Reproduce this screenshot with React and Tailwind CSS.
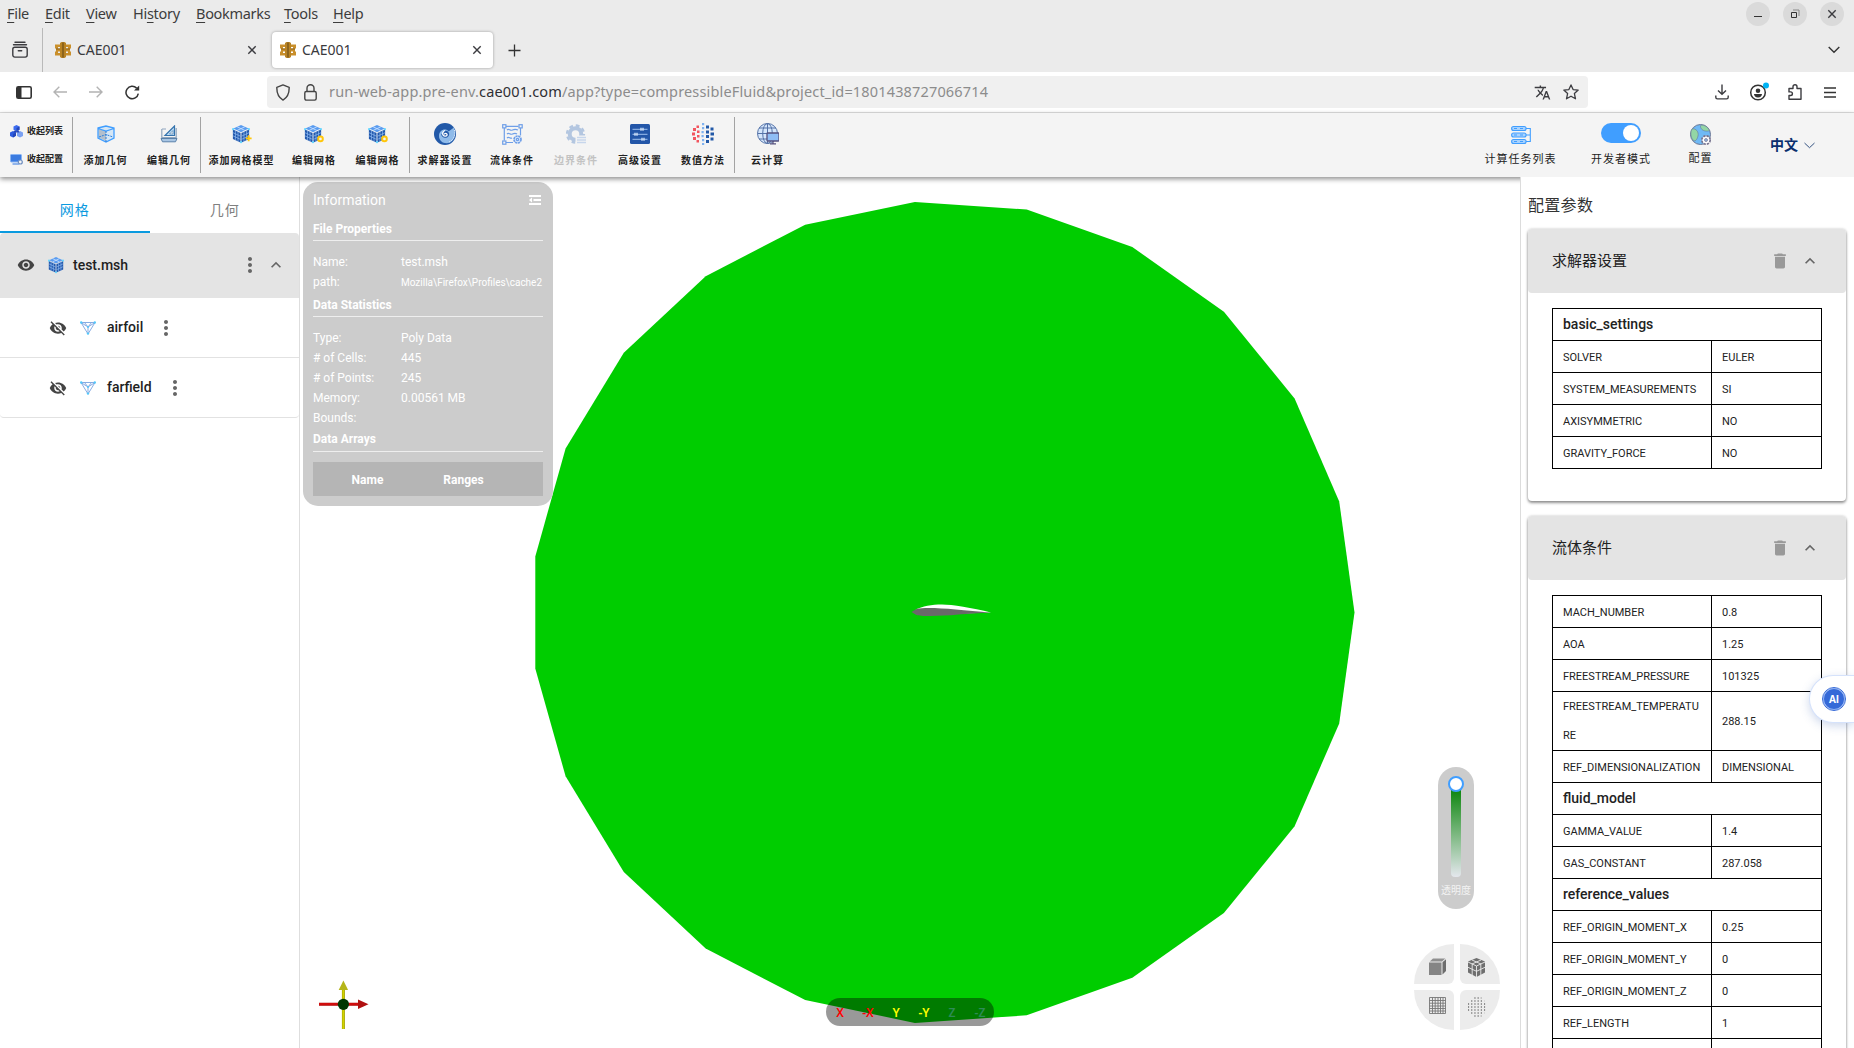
import React from "react";
import { MdVisibility, MdVisibilityOff, MdMoreVert, MdExpandLess, MdDelete, MdTranslate } from "react-icons/md";

const cjk = "font-[Roboto,'Noto_Sans_CJK_SC',sans-serif]";
const ui = "font-['Noto_Sans',sans-serif]";

/* ---------- browser chrome ---------- */

const menus = [
  ["", "F", "ile", "w-[38px]"],
  ["", "E", "dit", "w-[41px]"],
  ["", "V", "iew", "w-[47px]"],
  ["Hi", "s", "tory", "w-[63px]"],
  ["", "B", "ookmarks", "w-[88px]"],
  ["", "T", "ools", "w-[49px]"],
  ["", "H", "elp", "w-[40px]"],
];

function Favicon() {
  return (
    <svg width="16" height="16" viewBox="0 0 16 16" className="shrink-0">
      <path d="M0 2.500h5v2.500H3v1.500h10V5h-2V2.500h5V6.500h-1v3h1v4h-5V11h2V9.500H3V11h2v2.500H0v-4h1v-3H0z" fill="#c98f2b" />
      <path d="M5 1l1.500-1h3L11 1v14l-1.500 1h-3L5 15z" fill="#b98324" />
      <path d="M7.300.5h1.400v15H7.300z" fill="#7a581a" />
      <path d="M11 6.500h4v1h-4zM1 6.500h4v1H1z" fill="#8b6420" />
    </svg>
  );
}

function CloseX() {
  return (
    <svg width="10" height="10" viewBox="0 0 10 10" fill="none" stroke="#3c3c40" strokeWidth="1.4">
      <path d="M1.3 1.3l7.4 7.4M8.7 1.3L1.3 8.7" />
    </svg>
  );
}

function WinBtn({ children }) {
  return <div className="flex h-6 w-6 items-center justify-center rounded-full bg-[#dadada]">{children}</div>;
}

function MenuBar() {
  return (
    <div className="flex h-7 items-center bg-[#ebebeb] pl-[7px]">
      {menus.map(([a, u, b, w]) => (
        <div key={u + b} className={`${w} ${ui} shrink-0 whitespace-nowrap text-[14.5px] tracking-[-0.3px] text-[#3d3d3d]`}>
          {a}
          <span className="underline decoration-1 underline-offset-[3px]">{u}</span>
          {b}
        </div>
      ))}
      <div className="ml-auto flex gap-[13px] pr-[10px]">
        <WinBtn>
          <svg width="10" height="10" viewBox="0 0 10 10"><path d="M1 7.5h8" stroke="#333" /></svg>
        </WinBtn>
        <WinBtn>
          <svg width="10" height="10" viewBox="0 0 10 10" fill="none">
            <path d="M1.5 3.5h5v5h-5z" stroke="#333" /><path d="M3 1h6v6" stroke="#888" />
          </svg>
        </WinBtn>
        <WinBtn><CloseX /></WinBtn>
      </div>
    </div>
  );
}

function TabStrip() {
  return (
    <div className="flex h-11 bg-[#ebebeb]">
      <div className="flex w-[43px] items-center justify-center border-r border-[#b9b9b9] pb-px pr-[2px]">
        <svg width="16" height="17" viewBox="0 0 16 17" fill="none" stroke="#3c3c40" strokeWidth="1.4" strokeLinecap="round">
          <path d="M3 1.2h10M1.5 3.7h13" /><rect x=".8" y="6.2" width="14.4" height="9.9" rx="2" /><path d="M6.3 9.8h3.4" />
        </svg>
      </div>
      <div className="flex w-[229px] items-center pl-[12px]">
        <Favicon />
        <span className={`${ui} ml-[6px] pb-[2px] text-[14px] text-[#3a3a3e]`}>CAE001</span>
        <span className="ml-auto mr-[15px]"><CloseX /></span>
      </div>
      <div className="mt-1 flex h-9 w-[221px] items-center rounded bg-white pl-[8px] shadow-[0_0_3px_rgba(0,0,0,.35)]">
        <Favicon />
        <span className={`${ui} ml-[6px] pb-[2px] text-[14px] text-[#3a3a3e]`}>CAE001</span>
        <span className="ml-auto mr-[11px]"><CloseX /></span>
      </div>
      <div className="ml-[15px] flex items-center">
        <svg width="13" height="13" viewBox="0 0 13 13" stroke="#333" strokeWidth="1.3"><path d="M6.5.5v12M.5 6.5h12" /></svg>
      </div>
      <div className="ml-auto flex items-center pr-[14px]">
        <svg width="12" height="8" viewBox="0 0 12 8" fill="none" stroke="#333" strokeWidth="1.4"><path d="M.7 1L6 6.3 11.3 1" /></svg>
      </div>
    </div>
  );
}

function NavBar() {
  return (
    <div className="flex h-[41px] items-center border-b border-[#e0e0e0] bg-white pl-4">
      <svg width="16" height="13" viewBox="0 0 16 13"><rect x=".8" y=".8" width="14.4" height="11.4" rx="1.5" fill="none" stroke="#333" strokeWidth="1.6" /><path d="M1 1h4.5v11H1z" fill="#333" /></svg>
      <svg className="ml-[21px]" width="14" height="12" viewBox="0 0 14 12" fill="none" stroke="#b3b3b3" strokeWidth="1.4"><path d="M14 6H1M6.3.7L1 6l5.3 5.3" /></svg>
      <svg className="ml-[22px]" width="14" height="12" viewBox="0 0 14 12" fill="none" stroke="#b3b3b3" strokeWidth="1.4"><path d="M0 6h13M7.7.7L13 6l-5.3 5.3" /></svg>
      <svg className="ml-[22px]" width="15" height="15" viewBox="0 0 15 15" fill="none" stroke="#333" strokeWidth="1.5"><path d="M13.3 8.6A6.2 6.2 0 1 1 11.6 3.1" /><path d="M14.2.4v5.2H9z" fill="#333" stroke="none" /></svg>
      <div className="ml-[127px] flex h-8 w-[1321px] items-center rounded bg-[#f0f0f0] pl-[9px]">
        <svg width="14" height="17" viewBox="0 0 14 17" fill="none" stroke="#444" strokeWidth="1.4"><path d="M7 .9l6.200 2.400c.1 5-1.200 10-6.200 12.800C2 13.300.7 8.300.8 3.300z" strokeLinejoin="round" /></svg>
        <svg className="ml-[14px]" width="13" height="17" viewBox="0 0 13 17" fill="none" stroke="#444" strokeWidth="1.4"><rect x=".8" y="7.500" width="11.4" height="8.600" rx="1.500" /><path d="M3 7.500V4.300a3.500 3.500 0 0 1 7 0v3.200" /></svg>
        <div className={`${ui} ml-[12px] whitespace-nowrap text-[14.5px] tracking-[0.16px] text-[#8c8c8c]`}>
          run-web-app.pre-env.<span className="text-[#2f2f33]">cae001.com</span>/app?type=compressibleFluid&amp;project_id=1801438727066714
        </div>
        <MdTranslate className="ml-auto mr-[12px]" size={17} color="#3c3c40" />
        <svg className="mr-[9px]" width="16" height="16" viewBox="0 0 16 16" fill="none" stroke="#3c3c40" strokeWidth="1.3" strokeLinejoin="round"><path d="M8 .9l2.100 4.700 5.100.500-3.800 3.500 1.100 5.200L8 12.200l-4.500 2.600 1.100-5.200L.8 6.100l5.100-.5z" /></svg>
      </div>
      <div className="ml-auto flex items-center pr-[18px]">
        <svg width="14" height="16" viewBox="0 0 14 16" fill="none" stroke="#3c3c40" strokeWidth="1.400"><path d="M7 .500v9.500M3 6.500l4 3.800 4-3.800M.8 11.500v1.800c0 1 .7 1.600 1.600 1.600h9.200c.9 0 1.600-.6 1.600-1.600v-1.800" /></svg>
        <svg className="ml-[20px]" width="20" height="20" viewBox="0 0 20 20"><circle cx="9" cy="10.500" r="7.300" fill="none" stroke="#333" strokeWidth="1.500" /><circle cx="9" cy="8.700" r="2.300" fill="#333" /><path d="M5 12h8c0 2-1.500 3.400-4 3.400S5 14 5 12z" fill="#333" /><circle cx="17" cy="3.500" r="3" fill="#00b3f4" /></svg>
        <svg className="ml-[19px]" width="14" height="16" viewBox="0 0 14 16" fill="none" stroke="#3c3c40" strokeWidth="1.400" strokeLinejoin="round"><path d="M1 4.500h4V2.700a2 2 0 0 1 4 0v1.800h4v10.700H1v-3.700h1.600a1.800 1.800 0 0 0 0-3.600H1z" /></svg>
        <svg className="ml-[22px]" width="12" height="11" viewBox="0 0 12 11" stroke="#333" strokeWidth="1.300"><path d="M0 1h12M0 5.500h12M0 10h12" /></svg>
      </div>
    </div>
  );
}

/* ---------- toolbar icons ---------- */

function CubeGrid({ size = 18, badge }) {
  return (
    <svg width={size * 1.1} height={size} viewBox="0 0 22 20" className="overflow-visible">
      <path d="M10 0l8.500 4L10 8 1.500 4z" fill="#5a9cf0" />
      <path d="M5.700 2l8.500 4M14.300 2l-8.500 4" stroke="#cfe4ff" strokeWidth=".9" />
      <path d="M1 5l8.500 4v10.500L1 15.500z" fill="#2358ac" /><path d="M19 5l-8.500 4v10.500l8.500-4z" fill="#2358ac" />
      <path d="M1 8.500l8.500 4M19 8.500l-8.500 4M1 12l8.500 4M19 12l-8.500 4M3.800 6v11M6.700 7.500v11M13.300 7.500v11M16.200 6v11" stroke="#9cc8fb" strokeWidth=".7" fill="none" />
      <circle cx="1.300" cy="4.500" r="1.300" fill="#64d5ff" /><circle cx="18.700" cy="4.500" r="1.300" fill="#64d5ff" /><circle cx="10" cy="19" r="1.300" fill="#64d5ff" />
      {badge === "plus" && <path d="M18.500 11.500v6.500M15.300 14.800h6.500" stroke="#ffc60a" strokeWidth="2" />}
      {badge === "gear" && <circle cx="18.300" cy="15.500" r="2.600" fill="#f4f4f4" stroke="#ffc60a" strokeWidth="2.200" />}
    </svg>
  );
}

const icons = {
  addGeo: (
    <svg width="18" height="18" viewBox="0 0 18 18"><path d="M1 3l8-2 8 2v10l-8 4-8-4z" fill="#d5e6f5" /><path d="M1.500 4L9 6v10l-7.500-3.500z" fill="#b3bfcc" /><path d="M1 3l8-2 8 2v10l-8 4-8-4zM1 3.500L9 6l8-2.500" fill="none" stroke="#409eff" strokeWidth="1.300" /><path d="M9 6v11M2 12l7-2.500 7 2.500" stroke="#2c7fdc" strokeDasharray="2 1" fill="none" /></svg>
  ),
  editGeo: (
    <svg width="18" height="18" viewBox="0 0 18 18" fill="none"><path d="M2 4h4M1.800 4v8.500h14.400V3" stroke="#8fa6bf" strokeWidth="1.200" /><path d="M5 10.500L14.500 1v9.500z" fill="#bcdcf5" stroke="#3573ad" strokeWidth="1.200" /><path d="M9.500 9L13 5.500V9z" fill="#f4f4f4" stroke="#3573ad" strokeWidth=".6" /><path d="M1 13.500h16l-1.500 3.300h-13z" fill="#a9c6e4" stroke="#5a82ab" /></svg>
  ),
  addMesh: <CubeGrid badge="plus" />,
  editMesh: <CubeGrid badge="gear" />,
  solver: (
    <svg width="22" height="22" viewBox="0 0 22 22"><circle cx="11" cy="11" r="11" fill="#2259a8" /><path d="M20 4.500c2 7 1 12-4 15-5 2-11-.5-11-6.500C5 8.500 9 5.500 13 7c3 1.300 3.500 6 .5 7.500-2 .8-4-.5-3.800-2.500" fill="#8fbbea" /><path d="M9 12.500c-1-3 1.500-5.500 4-4.500 3 1.300 2.800 5.200 0 6.500-3 1.200-6-1-6-4" fill="#2259a8" /><path d="M10.300 11.500c0-1.500 2.600-1.500 2.800.2.100 1.500-2.800 2.200-4 .5-1-1.500-.2-4 2-4.700" fill="none" stroke="#fff" strokeWidth="1.300" /><path d="M20.500 7c1 5-.5 10-5.500 12" fill="none" stroke="#dcebfb" strokeWidth="1" strokeDasharray="1.500 .7" /></svg>
  ),
  fluid: (
    <svg width="21" height="21" viewBox="0 0 21 21" fill="none" stroke="#6f9fe8" strokeWidth="1.200"><path d="M3.500 2.300h13M2.300 3.500v13M3.500 18.500H11M18.500 3.500v8" /><g fill="#f4f4f4"><rect x=".7" y=".7" width="3.200" height="3.200" /><rect x="17" y=".7" width="3.200" height="3.200" /><rect x=".7" y="17" width="3.200" height="3.200" /></g><path d="M5 6c2-2 3 1.300 5.500 0S14 5 16 6M5 10c2-2 3 1.300 5.500 0S13.500 9 15 10M5 14c2-2 3 1 5 0" /><circle cx="15.500" cy="15.500" r="3.500" strokeWidth="1.700" strokeDasharray="2.200 .6" fill="#dbe8fb" /><circle cx="15.500" cy="15.500" r="1.200" /></svg>
  ),
  boundary: (
    <svg width="20" height="20" viewBox="0 0 20 20"><circle cx="9.500" cy="10" r="5.800" fill="none" stroke="#b3c6e0" strokeWidth="4" /><circle cx="9.500" cy="10" r="8.500" fill="none" stroke="#b3c6e0" strokeWidth="2.300" strokeDasharray="3.800 2.880" /><path d="M9.500 11.500H20V20H9.500z" fill="#f4f4f4" /><path d="M11 13.500h9M11 16h9M11 18.500h9" stroke="#c7d6ec" strokeWidth="1.400" /></svg>
  ),
  advanced: (
    <svg width="20" height="20" viewBox="0 0 20 20"><rect width="20" height="20" rx="1.500" fill="#2356a8" /><path d="M2.500 5.300h15M2.500 10.300h15M2.500 15.300h15" stroke="#9dc0ee" /><path d="M11 3.800v3M13 3.800v3M5 8.800v3M7 8.800v3M12 13.800v3M14 13.800v3" stroke="#dbe9fb" strokeWidth="1.300" /></svg>
  ),
  numeric: (
    <svg width="22" height="22" viewBox="0 0 22 22">
      <g fill="#f2555f"><path d="M1 5h3v3H1zM0 9.500h3v3H0zM1 14h3v3H1zM4.500 2.500h2.500v2.500H4.500zM5 7.500h2.500v2.500H5zM5 12h2.500v2.500H5zM4.500 17h2.500v2.500H4.500z" /></g>
      <g fill="#7fb2f0"><path d="M10 0h2.200v2.200H10zM10 4h2.200v2.200H10zM9.500 8h2.200v2.200H9.500zM9.500 12h2.200v2.200H9.500zM10 16h2.200v2.200H10zM10 20h2.200v2H10z" /></g>
      <g fill="#2259a8"><path d="M14 2.500h3v3h-3zM18.500 4.500h3v3h-3zM14 7.500h3v3h-3zM18.500 9.500H22v3h-3.500zM14 12h3v3h-3zM18.500 14.500h3v3h-3zM14 17h3v3h-3z" /></g>
    </svg>
  ),
  cloud: (
    <svg width="22" height="22" viewBox="0 0 22 22" fill="none" stroke="#5573a8" strokeWidth="1"><circle cx="10.500" cy="10.500" r="10" fill="#d5e6fb" /><ellipse cx="10.500" cy="10.500" rx="4.800" ry="10" /><path d="M10.500.5v20M.5 10.500h20M2 5h17M2 16h17" /><rect x="10" y="10" width="12" height="8" rx=".7" fill="#8fbdf5" stroke="#55527f" strokeWidth="1.300" /><path d="M16 18v2.500M13 20.800h6" stroke="#55527f" strokeWidth="1.200" /></svg>
  ),
};

const toolbar = [
  [["addGeo", "添加几何", "w-[65px]"], ["editGeo", "编辑几何", "w-[62px]"]],
  [["addMesh", "添加网格模型", "w-[81px]"], ["editMesh", "编辑网格", "w-[64px]"], ["editMesh", "编辑网格", "w-[63px]"]],
  [["solver", "求解器设置", "w-[70px]"], ["fluid", "流体条件", "w-[64px]"], ["boundary", "边界条件", "w-[64px]"], ["advanced", "高级设置", "w-[64px]"], ["numeric", "数值方法", "w-[62px]"]],
  [["cloud", "云计算", "w-[65px]"]],
];

function Toolbar() {
  return (
    <div className={`${cjk} relative z-10 flex h-16 shrink-0 items-center bg-[#f4f4f4] text-[#222] shadow-[0_2px_5px_rgba(0,0,0,.45)]`}>
      <div className="flex w-[72px] flex-col gap-[14px] pl-[9px] text-[9px] font-bold leading-[14px]">
        <div className="flex items-center gap-[4px] whitespace-nowrap">
          <svg className="ml-px" width="13" height="13" viewBox="0 0 13 13"><path d="M6.500 0l3 1.500v3.300l-3 1.500-3-1.500V1.500z" fill="#3d6cf0" /><path d="M3 6l3 1.500v3.300L3 12.500 0 11V7.500z" fill="#2d5be0" /><path d="M10 6l3 1.500V11l-3 1.500-3-1.500V7.500z" fill="#7ba1f2" /><path d="M6.500 3v3.300l3-1.500V1.500zM3 9v3.500l3-1.700V7.500zM4.500 5.500h4l1 2h-6z" fill="#2446b8" /></svg>
          收起列表
        </div>
        <div className="flex items-center gap-[4px] whitespace-nowrap">
          <svg className="ml-px" width="13" height="11" viewBox="0 0 13 11"><rect x=".500" y=".5" width="11" height="7.500" rx=".8" fill="#3b7be0" stroke="#8ab5f3" /><path d="M2.500 10h7" stroke="#5a92e6" strokeWidth="1.300" /><circle cx="10.300" cy="8" r="2" fill="#f4f4f4" stroke="#6f8fc0" strokeWidth="1.200" /></svg>
          收起配置
        </div>
      </div>
      {toolbar.map((group, i) => (
        <div key={i} className="flex h-14 border-l border-[#a3a3a3]">
          {group.map(([icon, label, w], j) => (
            <div key={j} className={`${w} flex shrink-0 flex-col items-center`}>
              <div className="mt-[6px] flex h-[22px] items-center">{icons[icon]}</div>
              <div className={`mt-[8px] whitespace-nowrap text-[10px] font-bold leading-4 tracking-[1px] ${icon === "boundary" ? "text-[#c2c2c2]" : ""}`}>{label}</div>
            </div>
          ))}
        </div>
      ))}
      <div className="ml-auto flex h-16 text-[11px] leading-4 tracking-[1px]">
        <div className="flex w-[100px] flex-col items-center">
          <svg className="ml-px mt-[12px]" width="20" height="20" viewBox="0 0 20 20" fill="#a8d3ff" stroke="#409eff" strokeWidth="1.100"><rect x=".6" y="1.500" width="14.500" height="4" rx="2" /><rect x=".6" y="8" width="14.500" height="4" rx="2" /><rect x=".6" y="14.500" width="14.500" height="4" rx="2" /><path d="M15 3.500h4.300v13H15M15 10h4.300" fill="none" /><path d="M3 3.500h3M9 3.500h3M3 10h3M9 10h3M3 16.500h3M9 16.500h3" /></svg>
          <div className="mt-[7px] whitespace-nowrap pl-px">计算任务列表</div>
        </div>
        <div className="flex w-[101px] flex-col items-center">
          <div className="mt-[10px] flex h-5 w-10 items-center justify-end rounded-full bg-[#409eff] pr-[2px]"><div className="h-4 w-4 rounded-full bg-white" /></div>
          <div className="mt-[9px] whitespace-nowrap pl-px">开发者模式</div>
        </div>
        <div className="flex w-[58px] flex-col items-center">
          <svg className="ml-px mt-[11px]" width="22" height="22" viewBox="0 0 22 22"><circle cx="10.500" cy="10.500" r="10" fill="#6fb9f5" stroke="#6c7794" /><path d="M2 5c4-1 7 3 6 7s-3 6-5 4C.5 13 .3 8 2 5zM11 1c4 0 7 2 8.500 5.500-3 1.500-7 0-8-1.500-1-1.300-1.500-3-.5-4z" fill="#93d6a5" stroke="#6c7794" strokeWidth=".6" /><circle cx="16" cy="16" r="4.200" fill="#fff" stroke="#77738f" strokeWidth="1.700" strokeDasharray="2.300 1" /><circle cx="16" cy="16" r="1.500" fill="#8fb4e0" stroke="#77738f" strokeWidth=".7" /></svg>
          <div className="mt-[5px] whitespace-nowrap pl-px">配置</div>
        </div>
        <div className="ml-[41px] flex w-[84px] items-center gap-[6px] text-[14px] font-bold tracking-[0] text-[#0b2f6e]">
          中文
          <svg className="mt-px" width="11" height="7" viewBox="0 0 11 7" fill="none" stroke="#33507f"><path d="M.5 1l5 4.700 5-4.700" /></svg>
        </div>
      </div>
    </div>
  );
}

/* ---------- left panel ---------- */

function MeshIcon() {
  return (
    <svg width="16" height="14" viewBox="0 0 16 14" fill="none" stroke="#7ba3e0" strokeWidth=".9"><path d="M1 1.500h14L8 13zM1 1.500l7 4.500 7-4.500M8 6v7M4.500 1.500L8 6l3.500-4.500" /><g fill="#53c8fa" stroke="none"><circle cx="1.200" cy="1.500" r="1.200" /><circle cx="14.800" cy="1.500" r="1.200" /><circle cx="8" cy="12.600" r="1.200" /><circle cx="8" cy="6" r="1" /></g></svg>
  );
}

function LeftPanel() {
  return (
    <div className={`${cjk} flex w-[300px] shrink-0 flex-col border-r border-[#dedede] text-[14px] text-[#1f1f1f]`}>
      <div className="flex h-14 shrink-0 tracking-[1px]">
        <div className="flex w-[150px] items-center justify-center border-b-2 border-[#0a9adf] pt-[12px] text-[#0a9adf]">网格</div>
        <div className="flex w-[150px] items-center justify-center pl-px pb-[2px] pt-[12px] text-[#808080]">几何</div>
      </div>
      <div className="flex h-[65px] shrink-0 items-center rounded-t bg-[#e4e4e4] pb-px pl-[17px]">
        <MdVisibility size={18} color="#444" />
        <div className="ml-[13px] mr-[9px] w-4"><CubeGrid size={16} /></div>
        <span className="font-medium">test.msh</span>
        <MdMoreVert className="ml-auto" size={24} color="#666" />
        <MdExpandLess className="ml-[4px] mr-[13px]" size={20} color="#666" />
      </div>
      {["airfoil", "farfield"].map((name) => (
        <div key={name} className="flex h-[60px] shrink-0 items-center border-b border-[#e2e2e2] pl-[49px] last:rounded-b">
          <MdVisibilityOff size={18} color="#444" />
          <span className="ml-[13px] mr-[11px]"><MeshIcon /></span>
          <span className="font-medium">{name}</span>
          <MdMoreVert className="ml-[11px]" size={24} color="#666" />
        </div>
      ))}
    </div>
  );
}

/* ---------- viewport ---------- */

const SIDES = 23;
const rim = Array.from({ length: SIDES }, (_, k) => {
  const a = (k * 2 * Math.PI) / SIDES;
  return `${(643 + 411.5 * Math.cos(a)).toFixed(1)},${(435.4 - 411.5 * Math.sin(a)).toFixed(1)}`;
}).join(" ");

function InfoHead({ children }) {
  return <div className="h-[24px] border-b border-[#eee] font-bold leading-6">{children}</div>;
}

function InfoRow({ k, v, small }) {
  return (
    <div className="flex h-5 items-center whitespace-nowrap">
      <span className="w-[88px] shrink-0">{k}</span>
      <span className={small ? "text-[10px]" : ""}>{v}</span>
    </div>
  );
}

function InfoPanel() {
  return (
    <div className="absolute left-[3px] top-[5px] h-[324px] w-[250px] rounded-[15px] bg-[#ccc] px-[10px] font-[Roboto,sans-serif] text-[12px] text-white">
      <div className="flex h-[35px] items-center justify-between pt-[2px] text-[14px]">
        <span>Information</span>
        <svg className="mb-px mr-[2px]" width="12" height="10" viewBox="0 0 12 10" fill="#fff"><path d="M0 0h12v2H0zM4.500 4H12v2H4.500zM0 8h12v2H0zM3 2.500v5L0 5z" /></svg>
      </div>
      <div className="pb-[11px]"><InfoHead>File Properties</InfoHead></div>
      <InfoRow k="Name:" v="test.msh" />
      <InfoRow k="path:" v="Mozilla\Firefox\Profiles\cache2" small />
      <div className="pb-[11px] pt-px"><InfoHead>Data Statistics</InfoHead></div>
      <InfoRow k="Type:" v="Poly Data" />
      <InfoRow k="# of Cells:" v="445" />
      <InfoRow k="# of Points:" v="245" />
      <InfoRow k="Memory:" v="0.00561 MB" />
      <InfoRow k="Bounds:" v="" />
      <div className="h-[24px] border-b border-[#eee] font-bold leading-[22px]">Data Arrays</div>
      <div className="mt-[10px] flex h-[34px] items-center bg-[#b5b5b5] pt-[2px] font-bold">
        <span className="w-[109px] text-center">Name</span>
        <span className="w-[83px] text-center">Ranges</span>
      </div>
    </div>
  );
}

function Viewport() {
  return (
    <div className="relative min-w-0 flex-1 overflow-hidden bg-white">
      <svg width="1220" height="871" viewBox="0 0 1220 871" className="block">
        <polygon points={rim} fill="#00cd00" />
        <path d="M615.500 433C622 429 632 427.500 642 427.500s30 3.500 49 8l-30 1z" fill="#fff" />
        <path d="M611.500 435L616.500 432c12-2.500 40 .5 74.500 3.800-25 .7-42 3.200-61 3.200-6 0-12-.3-14-1.300z" fill="#696969" />
        <g>
          <path d="M19 827.300h40" stroke="#b00000" strokeWidth="3" /><path d="M19 827h40" stroke="#f01818" />
          <path d="M58 822.500l10.500 4.800-10.500 4.800z" fill="#b01010" />
          <path d="M43.400 812v40" stroke="#a8a800" strokeWidth="3" /><path d="M43.200 812v40" stroke="#e6e600" />
          <path d="M38.700 813l4.700-9.500 4.700 9.500z" fill="#b5b518" />
          <circle cx="43.400" cy="827.300" r="5.600" fill="#003800" />
        </g>
      </svg>
      <InfoPanel />
      <div className="absolute left-[1138px] top-[590px] flex h-[142px] w-9 flex-col items-center rounded-[18px] bg-[#ccc] pt-[9px]">
        <div className="z-10 h-4 w-4 shrink-0 rounded-full border-2 border-[#409eff] bg-white" />
        <div className="-mt-2 h-[93px] w-[10px] shrink-0 rounded bg-[linear-gradient(to_bottom,#008000,#e4e7ed)]" />
        <div className="mt-[4px] whitespace-nowrap font-['Noto_Sans_CJK_SC',sans-serif] text-[10px] leading-[18px] text-[#f3f3f3]">透明度</div>
      </div>
      <div className="absolute left-[1114px] top-[767px] grid grid-cols-2 gap-[6px]">
        <div className="flex h-10 w-10 items-center justify-center rounded-br-[6px] rounded-tl-[40px] bg-[#ececec] pl-[7px] pt-[5px]">
          <svg width="17" height="17" viewBox="0 0 17 17"><path d="M0 4.500h12.500V17H0z" fill="#858585" /><path d="M.8 3.500L4 .5h12.300L13 3.500z" fill="#8f8f8f" /><path d="M13.500 4.300L17 1.200V13l-3.500 3.500z" fill="#6d6d6d" /></svg>
        </div>
        <div className="flex h-10 w-10 items-center justify-center rounded-bl-[6px] rounded-tr-[40px] bg-[#ececec] pr-[7px] pt-[7px]">
          <svg width="19" height="19" viewBox="0 0 19 19"><path d="M9.500 0L18 3.500v11L9.500 19 1 14.500v-11z" fill="#6f6f6f" /><path d="M1 4l8.500 4L18 4M1 9.300l8.500 4 8.500-4M9.500 8v11M5.200 6v11M13.800 6v11M5 2l9 4M14 2L5 6" stroke="#ececec" strokeWidth=".9" fill="none" /></svg>
        </div>
        <div className="flex h-10 w-10 items-center justify-center rounded-bl-[40px] rounded-tr-[6px] bg-[#ececec] pb-[9px] pl-[7px]">
          <svg width="17" height="17" viewBox="0 0 17 17" fill="none" stroke="#777" strokeWidth=".9"><path d="M.5.5h16v16H.5zM.5 3.500h16M.5 6.200h16M.5 9h16M.5 11.500h16M.5 14h16M3.500.5v16M6.200.5v16M9 .5v16M11.500.5v16M14 .5v16" /></svg>
        </div>
        <div className="flex h-10 w-10 items-center justify-center rounded-br-[40px] rounded-tl-[6px] bg-[#ececec] pb-[7px] pr-[5px]">
          <svg width="19" height="20" viewBox="0 0 19 20" stroke="#333" strokeWidth="1.100"><path d="M6.400 1h7M3.200 4h13M0 7h19M0 10h19M0 13h19M3.200 16h13M6.400 19h7" strokeDasharray="1.100 2.100" /></svg>
        </div>
      </div>
      <div className="absolute left-[526px] top-[821px] flex h-7 w-[168px] items-center rounded-[14px] bg-black/40 font-['Noto_Sans',sans-serif] text-[12px] font-semibold leading-7">
        {[["X", "text-[#f00]"], ["-X", "text-[#f00]"], ["Y", "text-[#ff0]"], ["-Y", "text-[#ff0]"], ["Z", "text-[#2e8b57]"], ["-Z", "text-[#2e8b57]"]].map(([t, c]) => (
          <span key={t} className={`w-7 pt-px text-center ${c}`}>{t}</span>
        ))}
      </div>
    </div>
  );
}

/* ---------- right panel ---------- */

function Card({ title, rows }) {
  return (
    <div className="mb-[15px] shrink-0 rounded bg-white pb-[32px] shadow-[0_2px_3px_rgba(0,0,0,.4),0_0_3px_rgba(0,0,0,.2)]">
      <div className="flex h-16 items-center rounded bg-[#e4e4e4] pl-[24px] text-[15px] text-[#222]">
        {title}
        <MdDelete className="ml-auto" size={20} color="#999" />
        <MdExpandLess className="ml-[10px] mr-[26px]" size={20} color="#666" />
      </div>
      <table className="ml-6 mt-[15px] w-[270px] table-fixed border-collapse text-[11px] text-[#222]">
        <colgroup><col className="w-[159px]" /><col /></colgroup>
        <tbody>
          {rows.map(([k, v]) =>
            v === undefined ? (
              <tr key={k} className="h-8"><td colSpan={2} className="border border-black px-[10px] pb-[2px] text-[14px] font-medium leading-[20px]">{k}</td></tr>
            ) : (
              <tr key={k} className="h-8">
                <td className={`break-all border border-black px-[10px] leading-[29px] ${k.length > 21 && v === "288.15" ? "" : "pt-px"}`}>{k}</td>
                <td className={`border border-black px-[10px] leading-[29px] ${v === "288.15" ? "" : "pt-px"}`}>{v}</td>
              </tr>
            )
          )}
        </tbody>
      </table>
    </div>
  );
}

const basic = [["basic_settings"], ["SOLVER", "EULER"], ["SYSTEM_MEASUREMENTS", "SI"], ["AXISYMMETRIC", "NO"], ["GRAVITY_FORCE", "NO"]];
const fluid = [
  ["MACH_NUMBER", "0.8"], ["AOA", "1.25"], ["FREESTREAM_PRESSURE", "101325"], ["FREESTREAM_TEMPERATURE", "288.15"], ["REF_DIMENSIONALIZATION", "DIMENSIONAL"],
  ["fluid_model"], ["GAMMA_VALUE", "1.4"], ["GAS_CONSTANT", "287.058"],
  ["reference_values"], ["REF_ORIGIN_MOMENT_X", "0.25"], ["REF_ORIGIN_MOMENT_Y", "0"], ["REF_ORIGIN_MOMENT_Z", "0"], ["REF_LENGTH", "1"], ["", ""],
];

function RightPanel() {
  return (
    <div className={`${cjk} relative z-20 flex w-[334px] shrink-0 flex-col overflow-hidden border-l border-[#dcdcdc] bg-white pl-[7px] pr-2`}>
      <div className="h-[52px] shrink-0 pt-[5px] text-[16px] leading-[47px] tracking-[0.3px] text-[#333]">配置参数</div>
      <Card title="求解器设置" rows={basic} />
      <Card title="流体条件" rows={fluid} />
      <div className="absolute right-0 top-[498px] flex h-[48px] w-[45px] items-center rounded-l-full border border-r-0 border-[#d5e2fb] bg-white pl-[13px] shadow-[0_3px_10px_rgba(60,100,180,.25)]">
        <div className="flex h-[22px] w-[22px] items-center justify-center rounded-full border border-[#8fb2f5] bg-[#3569d8] font-['Open_Sans',sans-serif] text-[10px] font-bold text-white outline outline-[#3569d8]">AI</div>
      </div>
    </div>
  );
}

export default function App() {
  return (
    <div className="flex h-screen w-full flex-col overflow-hidden bg-white">
      <MenuBar />
      <TabStrip />
      <NavBar />
      <Toolbar />
      <div className="flex min-h-0 flex-1">
        <LeftPanel />
        <Viewport />
        <RightPanel />
      </div>
    </div>
  );
}
